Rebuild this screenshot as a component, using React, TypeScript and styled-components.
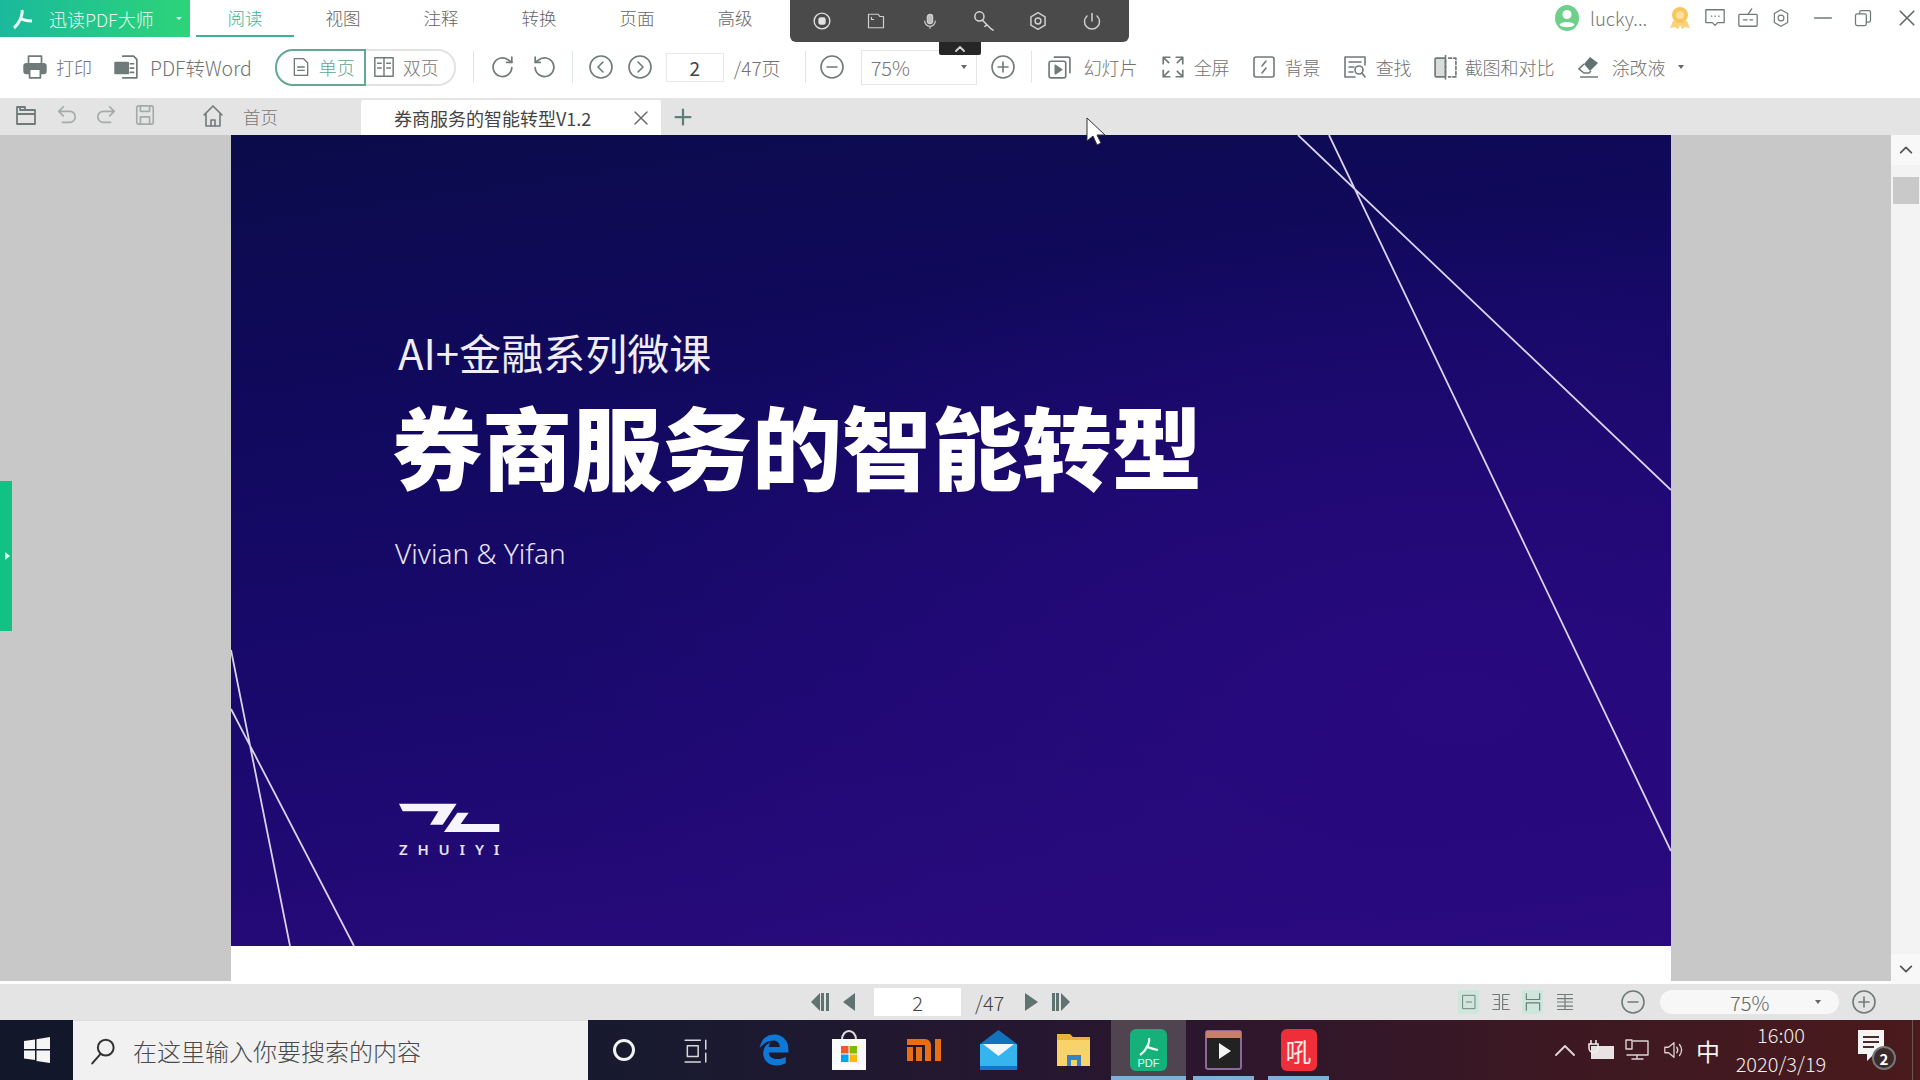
import React from "react";
import styled, { createGlobalStyle } from "styled-components";
import { FaEdgeLegacy } from "react-icons/fa";

const Global = createGlobalStyle`
  html, body { margin: 0; padding: 0; background: #fff; }
  body { font-family: "Noto Sans CJK SC", "Noto Sans", sans-serif; }
  * { box-sizing: border-box; }
`;

const Root = styled.div`
  position: relative; width: 1920px; height: 1080px; overflow: hidden;
  display: flex; flex-direction: column; background: #fff;
`;

/* ---- icon base ---- */
const Ico = styled.svg<{ $c?: string; $sw?: number }>`
  flex: none; display: block; fill: none;
  stroke: ${(p) => p.$c || "#6f7b79"};
  stroke-width: ${(p) => p.$sw || 1.6};
  stroke-linecap: round; stroke-linejoin: round;
`;

/* ---- title bar ---- */
const TitleBar = styled.header`
  height: 37px; display: flex; align-items: stretch; flex: none;
`;
const Brand = styled.div`
  width: 190px; display: flex; align-items: center; padding-left: 12px;
  background: linear-gradient(90deg, #1ab99c, #2dd478);
  color: #e9fbf4; font-size: 18px; font-weight: 300;
`;
const BrandName = styled.span` margin-left: 15px; `;
const BrandCaret = styled.span`
  margin-left: 22px; width: 0; height: 0;
  border-left: 3px solid transparent; border-right: 3px solid transparent; border-top: 3px solid #d9f7ea;
`;
const MenuTabs = styled.nav` display: flex; margin-left: 6px; `;
const MenuTab = styled.div<{ $active?: boolean }>`
  width: 98px; display: flex; align-items: center; justify-content: center;
  font-size: 17.5px; font-weight: 300;
  color: ${(p) => (p.$active ? "#3cb392" : "#666")};
  border-bottom: 2px solid ${(p) => (p.$active ? "#3cb392" : "transparent")};
`;
const TitleRight = styled.div`
  margin-left: auto; display: flex; align-items: center; padding-right: 4px; padding-bottom: 2px;
`;
const UserName = styled.span`
  color: #777; font-size: 18.500px; font-weight: 300; margin-left: 11px; width: 68px;
`;
const TitleIconSlot = styled.span<{ $ml: number }>` margin-left: ${(p) => p.$ml}px; display: flex; `;

/* ---- tool bar ---- */
const ToolBar = styled.div`
  height: 61px; flex: none; display: flex; align-items: center; padding-left: 22px;
  padding-bottom: 1px; background: #fff; color: #727272; font-size: 18px; font-weight: 300;
`;
const Tool = styled.div<{ $ml?: number; $gap?: number; $fs?: number }>`
  display: flex; align-items: center; gap: ${(p) => p.$gap ?? 8}px;
  margin-left: ${(p) => p.$ml ?? 0}px; white-space: nowrap;
  ${(p) => (p.$fs ? `font-size: ${p.$fs}px;` : "")}
`;
const Seg = styled.div`
  margin-left: 23px; display: flex; height: 37px; width: 181px;
`;
const SegBtn = styled.div<{ $active?: boolean }>`
  display: flex; align-items: center; gap: 8px; padding-left: 14px;
  border: ${(p) => (p.$active ? "2px solid #63a892" : "2px solid #e2e2e2")};
  ${(p) => (p.$active ? "border-radius: 18px 0 0 18px; width: 91px;" : "border-left: none; border-radius: 0 18px 18px 0; width: 90px; padding-left: 7px;")}
  color: ${(p) => (p.$active ? "#5fa692" : "#777")};
`;
const Sep = styled.div<{ $ml: number }>`
  width: 1px; height: 32px; background: #dfe7e6; margin-left: ${(p) => p.$ml}px; flex: none;
`;
const PageInput = styled.div`
  width: 58px; height: 29px; margin-left: 14px; border: 1px solid #e8e8e8;
  display: flex; align-items: center; justify-content: center; color: #444; font-size: 19px; font-weight: 400;
`;
const ZoomSelect = styled.div`
  position: relative; width: 116px; height: 35px; margin-left: 17px; border: 1px solid #e6e6e6;
  display: flex; align-items: center; padding-left: 9px; color: #777; font-size: 20px; font-weight: 300;
`;
const Caret = styled.span<{ $color?: string }>`
  width: 0; height: 0; flex: none; border-left: 3px solid transparent; border-right: 3px solid transparent;
  border-top: 4px solid ${(p) => p.$color || "#666"};
`;
const SelectCaret = styled(Caret)` margin-left: auto; margin-right: 9px; `;

/* ---- tab strip ---- */
const TabStrip = styled.div`
  height: 37px; flex: none; background: #e4e4e4; display: flex; align-items: flex-end; padding-left: 15px;
`;
const StripIcons = styled.div`
  height: 37px; display: flex; align-items: center; gap: 17px; padding-bottom: 3px;
`;
const HomeTab = styled.div`
  height: 37px; display: flex; align-items: center; gap: 18px; margin-left: 45px; width: 160px;
  color: #777; font-size: 17.5px; font-weight: 300; padding-bottom: 1px;
`;
const DocTab = styled.div`
  width: 300px; height: 35px; background: #fff; border-radius: 3px 3px 0 0;
  display: flex; align-items: center; padding-left: 33px; color: #444; font-size: 18px; font-weight: 400;
`;
const DocTabTitle = styled.span` width: 239px; white-space: nowrap; `;
const AddTab = styled.div` height: 37px; display: flex; align-items: center; margin-left: 13px; `;

/* ---- document area ---- */
const DocArea = styled.main`
  flex: 1; display: flex; min-height: 0; background: #fff; position: relative;
`;
const Canvas = styled.div`
  flex: 1; background: #c8c8c8; display: flex; flex-direction: column; padding-left: 231px;
  padding-right: 220px; margin-bottom: 3px;
`;
const Slide = styled.section`
  position: relative; height: 811px; flex: none; padding: 197px 0 0 163px; overflow: hidden; color: #fff;
  background:
    radial-gradient(ellipse 900px 500px at 85% 70%, #28097e 0%, rgba(40,9,126,0) 100%),
    linear-gradient(172deg, #0a0b4a 0%, #120960 32%, #1b096f 62%, #2e0b80 100%);
`;
const SlideLines = styled.svg`
  position: absolute; inset: 0; width: 100%; height: 100%; stroke: #d9d2ef; stroke-width: 1.8; fill: none;
`;
const Eyebrow = styled.h2`
  position: relative; margin: 0 0 0 4px; font-size: 42px; line-height: 40px; font-weight: 400; color: #efedf8;
  white-space: nowrap;
`;
const SlideTitle = styled.h1`
  position: relative; margin: 22px 0 0 -2px; font-size: 90px; line-height: 100px; font-weight: 900;
  white-space: nowrap; color: #fff;
`;
const Byline = styled.p`
  position: relative; margin: 40px 0 0 1px; font-family: "Noto Sans", sans-serif; font-size: 28px; line-height: 38px;
  font-weight: 300; color: #e8e4f6;
`;
const LogoBlock = styled.div`
  position: relative; margin: 231px 0 0 5px; width: 110px;
`;
const LogoMark = styled.svg` display: block; width: 101px; height: 30px; fill: #f6f4fc; `;
const LogoWord = styled.div`
  margin-top: 7px; font-family: "Noto Sans", sans-serif; font-size: 15px; line-height: 18px; font-weight: 600;
  letter-spacing: 9.800px; color: #e6e2f5; white-space: nowrap;
`;
const PageRest = styled.div` flex: 1; background: #fff; `;
const ScrollBar = styled.aside`
  width: 29px; flex: none; background: #f3f3f3; display: flex; flex-direction: column; align-items: center;
`;
const ScrollBtn = styled.div<{ $bottom?: boolean }>`
  height: 30px; width: 100%; display: flex; align-items: center; justify-content: center; background: #f8f8f8;
  ${(p) => (p.$bottom ? "margin-top: auto;" : "")}
`;
const ScrollThumb = styled.div`
  width: 26px; height: 27px; margin-top: 12px; background: #c9c9c9;
`;
const SideHandle = styled.div`
  position: absolute; left: 0; top: 346px; width: 12px; height: 150px; background: #12c184;
  display: flex; align-items: center; justify-content: flex-end; padding-right: 2px;
`;
const SideArrow = styled.span`
  width: 0; height: 0; border-top: 4px solid transparent; border-bottom: 4px solid transparent;
  border-left: 5px solid #d8fff0;
`;

/* ---- status bar ---- */
const StatusBar = styled.div`
  height: 36px; flex: none; background: #e4e4e4; display: flex; align-items: center; padding-left: 811px;
`;
const StatusPage = styled.div`
  width: 87px; height: 28px; margin-left: 19px; background: #fff; display: flex; align-items: center;
  justify-content: center; color: #444; font-size: 20px; font-weight: 300;
`;
const StatusTotal = styled.span`
  margin-left: 14px; width: 50px; color: #444; font-size: 20px; font-weight: 300;
`;
const ViewModes = styled.div` display: flex; gap: 11px; margin-left: 388px; align-items: center; `;
const ViewMode = styled.div<{ $on?: boolean }>`
  width: 21px; height: 24px; display: flex; align-items: center; justify-content: center;
  background: ${(p) => (p.$on ? "#cfe6dc" : "transparent")};
`;
const StatusZoom = styled.div`
  width: 179px; height: 24px; margin-left: 15px; margin-right: 13px; border-radius: 12px; background: #f7f7f7; display: flex;
  align-items: center; color: #666; font-size: 20px; font-weight: 300; padding-left: 70px;
`;
const StatusCaret = styled(Caret)` margin-left: 46px; `;

/* ---- task bar ---- */
const TaskBar = styled.footer`
  height: 60px; flex: none; display: flex; align-items: stretch; color: #fff;
  background: linear-gradient(90deg, #12172a 0%, #191a30 35%, #2a162f 60%, #3a1824 78%, #4a1a1c 100%);
`;
const StartBtn = styled.div` width: 73px; display: flex; align-items: center; justify-content: center; `;
const SearchBox = styled.div`
  width: 515px; background: #f1f1f1; display: flex; align-items: center; padding-left: 17px; gap: 16px;
  color: #4a4a4a; font-size: 24px; font-weight: 300; border-top: 1px solid #ddd;
`;
const SysSlot = styled.div` width: 72px; display: flex; align-items: center; justify-content: center; `;
const AppList = styled.div` display: flex; margin-left: 4px; `;
const AppSlot = styled.div<{ $active?: boolean; $open?: boolean }>`
  position: relative; width: 75px; display: flex; align-items: center; justify-content: center;
  background: ${(p) => (p.$active ? "#4f444f" : "transparent")};
  ${(p) => p.$open ? `&::after { content: ""; position: absolute; left: ${p.$active ? 0 : 7}px; right: ${p.$active ? 0 : 7}px; bottom: 0; height: 4px; background: #7fb0dc; }` : ""}
`;
const EdgeMark = styled(FaEdgeLegacy)` color: #0f78d6; width: 32px; height: 34px; `;
const PdfApp = styled.div`
  width: 37px; height: 42px; border-radius: 6px; background: #16b07a; display: flex; flex-direction: column;
  align-items: center; justify-content: flex-end; padding-bottom: 2px;
  color: #e8fff5; font-family: "Liberation Sans", sans-serif; font-size: 11px; line-height: 12px;
`;
const RedApp = styled.div`
  width: 36px; height: 42px; border-radius: 6px; background: #ee2e38; display: flex; align-items: center; justify-content: center;
  color: #ffe9e9; font-size: 26px; font-weight: 400;
`;
const Tray = styled.div`
  margin-left: auto; display: flex; align-items: center; padding-right: 7px; position: relative;
`;
const ImeLabel = styled.span` margin-left: 4px; width: 36px; text-align: center; font-size: 24px; font-weight: 400; color: #f4f4f4; `;
const Clock = styled.div`
  width: 92px; margin-left: 9px; display: flex; flex-direction: column; align-items: center;
  font-size: 20px; line-height: 29px; font-weight: 300; color: #eee; padding-bottom: 2px;
`;
const NotifyBox = styled.div` position: relative; margin-left: 31px; width: 38px; height: 40px; margin-right: 16px; `;
const NotifyBadge = styled.span`
  position: absolute; right: 0; bottom: 0; width: 24px; height: 24px; border-radius: 50%;
  border: 2px solid #777; background: #3a2a2a; color: #fff; font-size: 15px; font-weight: 700;
  display: flex; align-items: center; justify-content: center; line-height: 1;
`;
const DesktopEdge = styled.div` width: 1px; align-self: stretch; background: #6c5555; `;

/* ---- overlays ---- */
const Recorder = styled.div`
  position: absolute; left: 790px; top: 0; width: 339px; height: 42px; background: #4a4a4a; border-radius: 0 0 6px 6px;
  display: flex; align-items: center; padding: 0 0 1px 5px;
`;
const RecorderSlot = styled.div`
  width: 54px; display: flex; justify-content: center; align-items: center;
`;
const RecorderPull = styled.div`
  position: absolute; left: 939px; top: 42px; width: 42px; height: 13px; background: #262626; border-radius: 0 0 2px 2px;
  display: flex; align-items: center; justify-content: center;
`;
const Cursor = styled.svg`
  position: absolute; left: 1086px; top: 117px; width: 20px; height: 30px;
`;

/* ---- drawn icons ---- */
const I = (p: { s?: number; w?: number; h?: number; c?: string; sw?: number; children: React.ReactNode; vb?: string }) => (
  <Ico width={p.w ?? p.s ?? 24} height={p.h ?? p.s ?? 24} viewBox={p.vb ?? "0 0 24 24"} $c={p.c} $sw={p.sw}>{p.children}</Ico>
);
const Circ = ({ children, s = 24, c }: { children: React.ReactNode; s?: number; c?: string }) => (
  <I s={s} c={c}><circle cx="12" cy="12" r="11" />{children}</I>
);

const TriLeft = ({ bar }: { bar?: boolean }) => (
  <svg width={bar ? 19 : 12} height="18" viewBox={bar ? "0 0 19 18" : "0 0 12 18"} fill="#5f7471">
    {bar ? <><path d="M9 0v18L0 9z" /><rect x="10" y="0" width="3" height="18" /><rect x="15" y="0" width="3" height="18" /></> : <path d="M12 0v18L0 9z" />}
  </svg>
);
const TriRight = ({ bar }: { bar?: boolean }) => (
  <svg width={bar ? 18 : 14} height="18" viewBox={bar ? "0 0 18 18" : "0 0 14 18"} fill="#5f7471">
    {bar ? <><rect x="0" width="3" height="18" /><rect x="4" width="3" height="18" /><path d="M9 0v18l9-9z" /></> : <path d="M0 0v18l13-9z" />}
  </svg>
);

export default function App() {
  return (
    <Root>
      <Global />
      <TitleBar>
        <Brand>
          <svg width="22" height="22" viewBox="0 0 22 22" fill="none" stroke="#eafff6" strokeWidth="3" strokeLinejoin="round">
            <path d="M10 2c1 5-3 14-8 18M8 10c3 2 7 3 12 3" />
          </svg>
          <BrandName>迅读PDF大师</BrandName>
          <BrandCaret />
        </Brand>
        <MenuTabs>
          <MenuTab $active>阅读</MenuTab>
          <MenuTab>视图</MenuTab>
          <MenuTab>注释</MenuTab>
          <MenuTab>转换</MenuTab>
          <MenuTab>页面</MenuTab>
          <MenuTab>高级</MenuTab>
        </MenuTabs>
        <TitleRight>
          <svg width="24" height="26" viewBox="0 0 24 26">
            <ellipse cx="12" cy="13" rx="12" ry="13" fill="#6fd08c" />
            <circle cx="12" cy="9.5" r="4.5" fill="#fff" />
            <path d="M4.5 20c1-4 14-4 15 0-3 3-12 3-15 0z" fill="#fff" />
          </svg>
          <UserName>lucky...</UserName>
          <TitleIconSlot $ml={12}>
            <svg width="20" height="24" viewBox="0 0 20 24">
              <path d="M3 15l-3 7 5-1 3 2 2-4 2 4 3-2 5 1-3-7z" fill="#f9d27a" />
              <circle cx="10" cy="9" r="8" fill="#f8c75c" />
              <circle cx="10" cy="9" r="4" fill="#fbe0a0" />
            </svg>
          </TitleIconSlot>
          <TitleIconSlot $ml={14}>
            <I s={22} sw={1.4}><path d="M2 3h20v14h-7l-3 3-3-3H2z" /><path d="M8 10h.5M12 10h.5M16 10h.5" /></I>
          </TitleIconSlot>
          <TitleIconSlot $ml={11}>
            <I s={22} sw={1.4}><rect x="2" y="8" width="20" height="13" rx="1" /><path d="M12 8l4-6M7 14h4M14 14h3" /></I>
          </TitleIconSlot>
          <TitleIconSlot $ml={12}>
            <I s={20} sw={1.4}><path d="M12 2l8 4.500v11L12 22l-8-4.500v-11z" /><circle cx="12" cy="12" r="3.500" /></I>
          </TitleIconSlot>
          <TitleIconSlot $ml={22}>
            <I w={20} h={20} sw={2}><path d="M2 12h20" /></I>
          </TitleIconSlot>
          <TitleIconSlot $ml={20}>
            <I w={20} h={20} sw={1.5}><rect x="3" y="7" width="13" height="14" rx="2" /><path d="M8 7V5a2 2 0 0 1 2-2h9a2 2 0 0 1 2 2v10a2 2 0 0 1-2 2h-3" /></I>
          </TitleIconSlot>
          <TitleIconSlot $ml={25}>
            <I w={18} h={18} sw={2.2} c="#5f6b69"><path d="M3 3l18 18M21 3L3 21" /></I>
          </TitleIconSlot>
        </TitleRight>
      </TitleBar>

      <ToolBar>
        <Tool $gap={8}>
          <I s={26}><path d="M6 9V2h12v7" /><rect x="2" y="9" width="20" height="9" rx="2" fill="#6f7b79" /><rect x="7" y="14" width="10" height="8" fill="#fff" /></I>
          打印
        </Tool>
        <Tool $ml={21} $gap={11} $fs={19.5}>
          <I s={26}><path d="M9 2h10l3 3v17H9" /><rect x="2" y="8" width="12" height="10" fill="#6f7b79" /><path d="M16 9h3M16 13h3M16 17h3" /></I>
          PDF转Word
        </Tool>
        <Seg>
          <SegBtn $active>
            <I w={20} h={24}><path d="M4 2h11l5 5v15H4z" /><path d="M8 12h8M8 16h8" /></I>
            单页
          </SegBtn>
          <SegBtn>
            <I w={22} h={24}><rect x="2" y="2" width="20" height="20" /><path d="M12 2v20M5 8h4M5 13h4M15 8h4M15 13h4" /></I>
            双页
          </SegBtn>
        </Seg>
        <Sep $ml={17} />
        <Tool $ml={17} $gap={15}>
          <I s={25}><path d="M20 12a9 9 0 1 1-3-7l3 2" /><path d="M20 2v5h-5" /></I>
          <I s={25}><path d="M4 12a9 9 0 1 0 3-7L4 7" /><path d="M4 2v5h5" /></I>
        </Tool>
        <Sep $ml={16} />
        <Tool $ml={16} $gap={15}>
          <Circ><path d="M14 7l-5 5 5 5" /></Circ>
          <Circ><path d="M10 7l5 5-5 5" /></Circ>
        </Tool>
        <PageInput>2</PageInput>
        <Tool $ml={10} $fs={19}>/47页</Tool>
        <Sep $ml={24} />
        <Tool $ml={14}>
          <Circ><path d="M7 12h10" /></Circ>
        </Tool>
        <ZoomSelect>75%<SelectCaret /></ZoomSelect>
        <Tool $ml={14}>
          <Circ><path d="M7 12h10M12 7v10" /></Circ>
        </Tool>
        <Sep $ml={16} />
        <Tool $ml={15} $gap={12}>
          <I s={25}><rect x="2" y="6" width="16" height="16" rx="2" /><path d="M7 2h13a2 2 0 0 1 2 2v13" /><path d="M8 10v8l6-4z" fill="#6f7b79" /></I>
          幻灯片
        </Tool>
        <Tool $ml={22} $gap={8}>
          <I s={26}><path d="M3 9V3h6M21 9V3h-6M3 15v6h6M21 15v6h-6M3 3l5 5M21 3l-5 5M3 21l5-5M21 21l-5-5" /></I>
          全屏
        </Tool>
        <Tool $ml={22} $gap={9}>
          <I s={24}><rect x="2" y="2" width="20" height="20" rx="2" /><path d="M14 6l-4 5M14 13l-4 5" /></I>
          背景
        </Tool>
        <Tool $ml={22} $gap={9}>
          <I s={24}><path d="M22 10V2H2v20h10" /><path d="M6 7h12M6 12h5M6 17h4" /><circle cx="16" cy="15" r="4" /><path d="M19 18l3 4" /></I>
          查找
        </Tool>
        <Tool $ml={21} $gap={7}>
          <I s={25}><rect x="2" y="3" width="10" height="18" rx="1" fill="#d8dddc" /><path d="M12 0v24M15 3h7v18h-7" strokeDasharray="3 2" /></I>
          截图和对比
        </Tool>
        <Tool $ml={23} $gap={12}>
          <svg width="22" height="24" viewBox="0 0 22 24">
            <path d="M12 2l8 6-8 8-6-7z" fill="#5f7471" />
            <path d="M6 9l-5 5 5 4h5l2-2M2 22h18" fill="none" stroke="#6f7b79" strokeWidth="1.6" />
          </svg>
          涂改液
          <Caret />
        </Tool>
      </ToolBar>

      <TabStrip>
        <StripIcons>
          <I s={24} c="#6f7b79" sw={1.8}><path d="M2 21V4h8v3h10v4M2 21h18V11H2" /><path d="M5 4v3h5" /></I>
          <I s={22} c="#a3abaa" sw={1.8}><path d="M8 3L3 8l5 5M3 8h12a6 6 0 0 1 0 12H7" /></I>
          <I s={22} c="#a3abaa" sw={1.8}><path d="M16 3l5 5-5 5M21 8H9a6 6 0 0 0 0 12h8" /></I>
          <I s={22} c="#a3abaa" sw={1.8}><rect x="3" y="2" width="18" height="20" rx="2" /><path d="M7 2v6h10V2M7 22v-8h10v8" /></I>
        </StripIcons>
        <HomeTab>
          <I s={24} c="#6f7b79"><path d="M3 11l9-9 9 9M5 10v12h14V10" /><path d="M10 22v-6h4v6" /></I>
          首页
        </HomeTab>
        <DocTab>
          <DocTabTitle>券商服务的智能转型V1.2</DocTabTitle>
          <I s={16} sw={2.2} c="#6b6b6b"><path d="M3 3l18 18M21 3L3 21" /></I>
        </DocTab>
        <AddTab>
          <I s={18} sw={3} c="#5f7f78"><path d="M12 2v20M2 12h20" /></I>
        </AddTab>
      </TabStrip>

      <DocArea>
        <Canvas>
          <Slide>
            <SlideLines viewBox="0 0 1440 811">
              <path d="M1067 0L1440 355M1098 0L1440 716M0 515L59 811M0 574L123 811" />
            </SlideLines>
            <Eyebrow>AI+金融系列微课</Eyebrow>
            <SlideTitle>券商服务的智能转型</SlideTitle>
            <Byline>Vivian &amp; Yifan</Byline>
            <LogoBlock>
              <LogoMark viewBox="537 555 303 90">
                <path d="M537 557H710L668 620H630L655 580H548z" />
                <path d="M672 642L712 584H746L722 618H838V642z" />
              </LogoMark>
              <LogoWord>ZHUIYI</LogoWord>
            </LogoBlock>
          </Slide>
          <PageRest />
        </Canvas>
        <ScrollBar>
          <ScrollBtn><I s={16} sw={2.6} c="#555"><path d="M4 16l8-8 8 8" /></I></ScrollBtn>
          <ScrollThumb />
          <ScrollBtn $bottom><I s={16} sw={2.6} c="#555"><path d="M4 8l8 8 8-8" /></I></ScrollBtn>
        </ScrollBar>
        <SideHandle><SideArrow /></SideHandle>
      </DocArea>

      <StatusBar>
        <TriLeft bar />
        <Tool $ml={13}><TriLeft /></Tool>
        <StatusPage>2</StatusPage>
        <StatusTotal>/47</StatusTotal>
        <Tool $ml={0}><TriRight /></Tool>
        <Tool $ml={13}><TriRight bar /></Tool>
        <ViewModes>
          <ViewMode $on><I w={16} h={20} sw={1.4}><rect x="3" y="2" width="18" height="20" /><path d="M8 12h8" /></I></ViewMode>
          <ViewMode><I w={20} h={20} sw={1.4}><path d="M2 3h8v18H2M22 3h-8v18h8M4 9h5M4 15h5M15 9h5M15 15h5" /></I></ViewMode>
          <ViewMode $on><I w={20} h={20} sw={1.4}><path d="M4 2v7h16V2M4 22v-9h16v9" /></I></ViewMode>
          <ViewMode><I w={20} h={20} sw={1.4}><path d="M3 3h18M3 8h18M3 12h18M3 17h18M3 21h18M12 3v18" /></I></ViewMode>
        </ViewModes>
        <Tool $ml={46}>
          <Circ><path d="M7 12h10" /></Circ>
        </Tool>
        <StatusZoom>75%<StatusCaret /></StatusZoom>
        <Circ><path d="M7 12h10M12 7v10" /></Circ>
      </StatusBar>

      <TaskBar>
        <StartBtn>
          <svg width="26" height="26" viewBox="0 0 26 26" fill="#f5f5f5">
            <path d="M0 4l11-1.500V12H0zM12.500 2.200L26 0v12H12.500zM0 13.500h11V23L0 21.500zM12.500 13.500H26V26l-13.500-2z" />
          </svg>
        </StartBtn>
        <SearchBox>
          <I w={27} h={30} sw={1.8} c="#333"><circle cx="14" cy="9" r="7" /><path d="M9 15L2 23" /></I>
          在这里输入你要搜索的内容
        </SearchBox>
        <SysSlot>
          <I s={24} sw={3} c="#f2f2f2"><circle cx="12" cy="12" r="9.500" /></I>
        </SysSlot>
        <SysSlot>
          <I s={26} sw={1.4} c="#d8d8d8"><path d="M2 3h14M2 23h14M4 8h10v10H4zM21 3v8M21 15v8" /></I>
        </SysSlot>
        <AppList>
          <AppSlot><EdgeMark /></AppSlot>
          <AppSlot>
            <svg width="36" height="40" viewBox="0 0 36 40">
              <path d="M11 10c0-12 14-12 14 0" fill="none" stroke="#ddd" strokeWidth="2" />
              <path d="M1 9h34v31H1z" fill="#fbfbfb" />
              <rect x="10" y="16" width="7.500" height="7.500" fill="#ef5a2a" />
              <rect x="18.500" y="16" width="7.500" height="7.500" fill="#7fba00" />
              <rect x="10" y="24.500" width="7.500" height="7.500" fill="#00a4ef" />
              <rect x="18.500" y="24.500" width="7.500" height="7.500" fill="#ffb900" />
            </svg>
          </AppSlot>
          <AppSlot>
            <svg width="34" height="22" viewBox="0 0 34 22" fill="#e86f14">
              <path d="M0 0h18a6 6 0 0 1 6 6v16h-6V6H0zM0 8h6v14H0zM9 8h6v14H9zM28 0h6v22h-6z" />
            </svg>
          </AppSlot>
          <AppSlot>
            <svg width="37" height="40" viewBox="0 0 37 40">
              <path d="M0 14L18.500 0 37 14v26H0z" fill="#1273bd" />
              <path d="M0 14h37v26H0z" fill="#36b4ee" />
              <path d="M3 14h31L18.500 26z" fill="#f2f7fb" />
              <path d="M0 36h37v4H0z" fill="#0e79c4" />
            </svg>
          </AppSlot>
          <AppSlot>
            <svg width="33" height="32" viewBox="0 0 33 32">
              <path d="M0 0h13l3 3h17v29H0z" fill="#e8b23c" />
              <path d="M0 6h33v26H0z" fill="#f7d36a" />
              <path d="M10 32V21h14v11h-4v-6h-6v6z" fill="#3d7fc4" />
            </svg>
          </AppSlot>
          <AppSlot $active $open>
            <PdfApp>
              <svg width="22" height="20" viewBox="0 0 22 20" fill="none" stroke="#eafff6" strokeWidth="2.200" strokeLinejoin="round">
                <path d="M11 1c1 5-3 13-9 17M8 9c3 2 7 3 12 4" />
              </svg>
              PDF
            </PdfApp>
          </AppSlot>
          <AppSlot $open>
            <svg width="37" height="40" viewBox="0 0 37 40">
              <rect x="1" y="1" width="35" height="38" rx="2" fill="#222" stroke="#8b6a9a" strokeWidth="2" />
              <rect x="1" y="1" width="35" height="7" fill="#c9806a" />
              <path d="M14 13v16l12-8z" fill="#f4f4f4" />
            </svg>
          </AppSlot>
          <AppSlot $open><RedApp>吼</RedApp></AppSlot>
        </AppList>
        <Tray>
          <I w={20} h={14} sw={1.8} c="#e0d8d8" vb="0 0 20 12"><path d="M1 11l9-9 9 9" /></I>
          <Tool $ml={13}>
            <svg width="26" height="24" viewBox="0 0 26 24">
              <rect x="3" y="8" width="23" height="13" fill="#e8e2e2" />
              <path d="M3 2v4M8 2v4M1 6h9v4a4 4 0 0 1-9 0z" fill="none" stroke="#f2f2f2" strokeWidth="1.500" />
            </svg>
          </Tool>
          <Tool $ml={10}>
            <I w={26} h={24} sw={1.4} c="#dcd4d4"><path d="M8 3h15v14H2M12 17v4M7 21h11" /><rect x="1" y="2" width="6" height="9" /></I>
          </Tool>
          <Tool $ml={12}>
            <I w={24} h={22} sw={1.4} c="#dcd4d4"><path d="M2 9v6h4l6 5V4L6 9zM15 9c1.500 2 1.500 4 0 6M18 6c3 4 3 8 0 12" /></I>
          </Tool>
          <ImeLabel>中</ImeLabel>
          <Clock><span>16:00</span><span>2020/3/19</span></Clock>
          <NotifyBox>
            <svg width="26" height="32" viewBox="0 0 26 32" fill="#f4f4f4">
              <path d="M0 0h26v24H16l-7 7v-7H0z" />
              <path d="M5 6h16v2H5zM5 11h16v2H5zM5 16h11v2H5z" fill="#4a2a2a" />
            </svg>
            <NotifyBadge>2</NotifyBadge>
          </NotifyBox>
          <DesktopEdge />
        </Tray>
      </TaskBar>

      <Recorder>
        <RecorderSlot><I s={18} c="#e2e2e2" sw={1.8}><circle cx="12" cy="12" r="10.500" /><rect x="8" y="8" width="8" height="8" rx="2" fill="#e2e2e2" /></I></RecorderSlot>
        <RecorderSlot><I w={20} h={18} c="#cfcfcf" sw={1.6}><path d="M2 3h13l2 3h5v15H2z" /><path d="M6 7v3h3" /></I></RecorderSlot>
        <RecorderSlot><I w={16} h={22} c="#cfcfcf" sw={1.8}><rect x="8" y="2" width="8" height="14" rx="4" fill="#bdbdbd" /><path d="M4 12a8 8 0 0 0 16 0M12 20v3" /></I></RecorderSlot>
        <RecorderSlot><I w={22} h={22} c="#d8d8d8" sw={1.6}><circle cx="7" cy="7" r="5" /><path d="M10 11l9 9M15 16l-2 2M19 20l3 2" /></I></RecorderSlot>
        <RecorderSlot><I s={20} c="#cfcfcf" sw={1.8}><path d="M12 2l8.500 5v10L12 22l-8.500-5V7z" /><circle cx="12" cy="12" r="3.500" /></I></RecorderSlot>
        <RecorderSlot><I s={20} c="#cfcfcf" sw={1.8}><path d="M12 3v9M6 6a9 9 0 1 0 12 0" /></I></RecorderSlot>
      </Recorder>
      <RecorderPull>
        <I w={12} h={8} sw={2} c="#cfcfcf" vb="0 0 12 8"><path d="M2 6l4-4 4 4" /></I>
      </RecorderPull>
      <Cursor viewBox="0 0 20 30">
        <path d="M1 1v23l6-5 4 9 4-2-4-8h8z" fill="#fff" stroke="#333" strokeWidth="1" />
      </Cursor>
    </Root>
  );
}
